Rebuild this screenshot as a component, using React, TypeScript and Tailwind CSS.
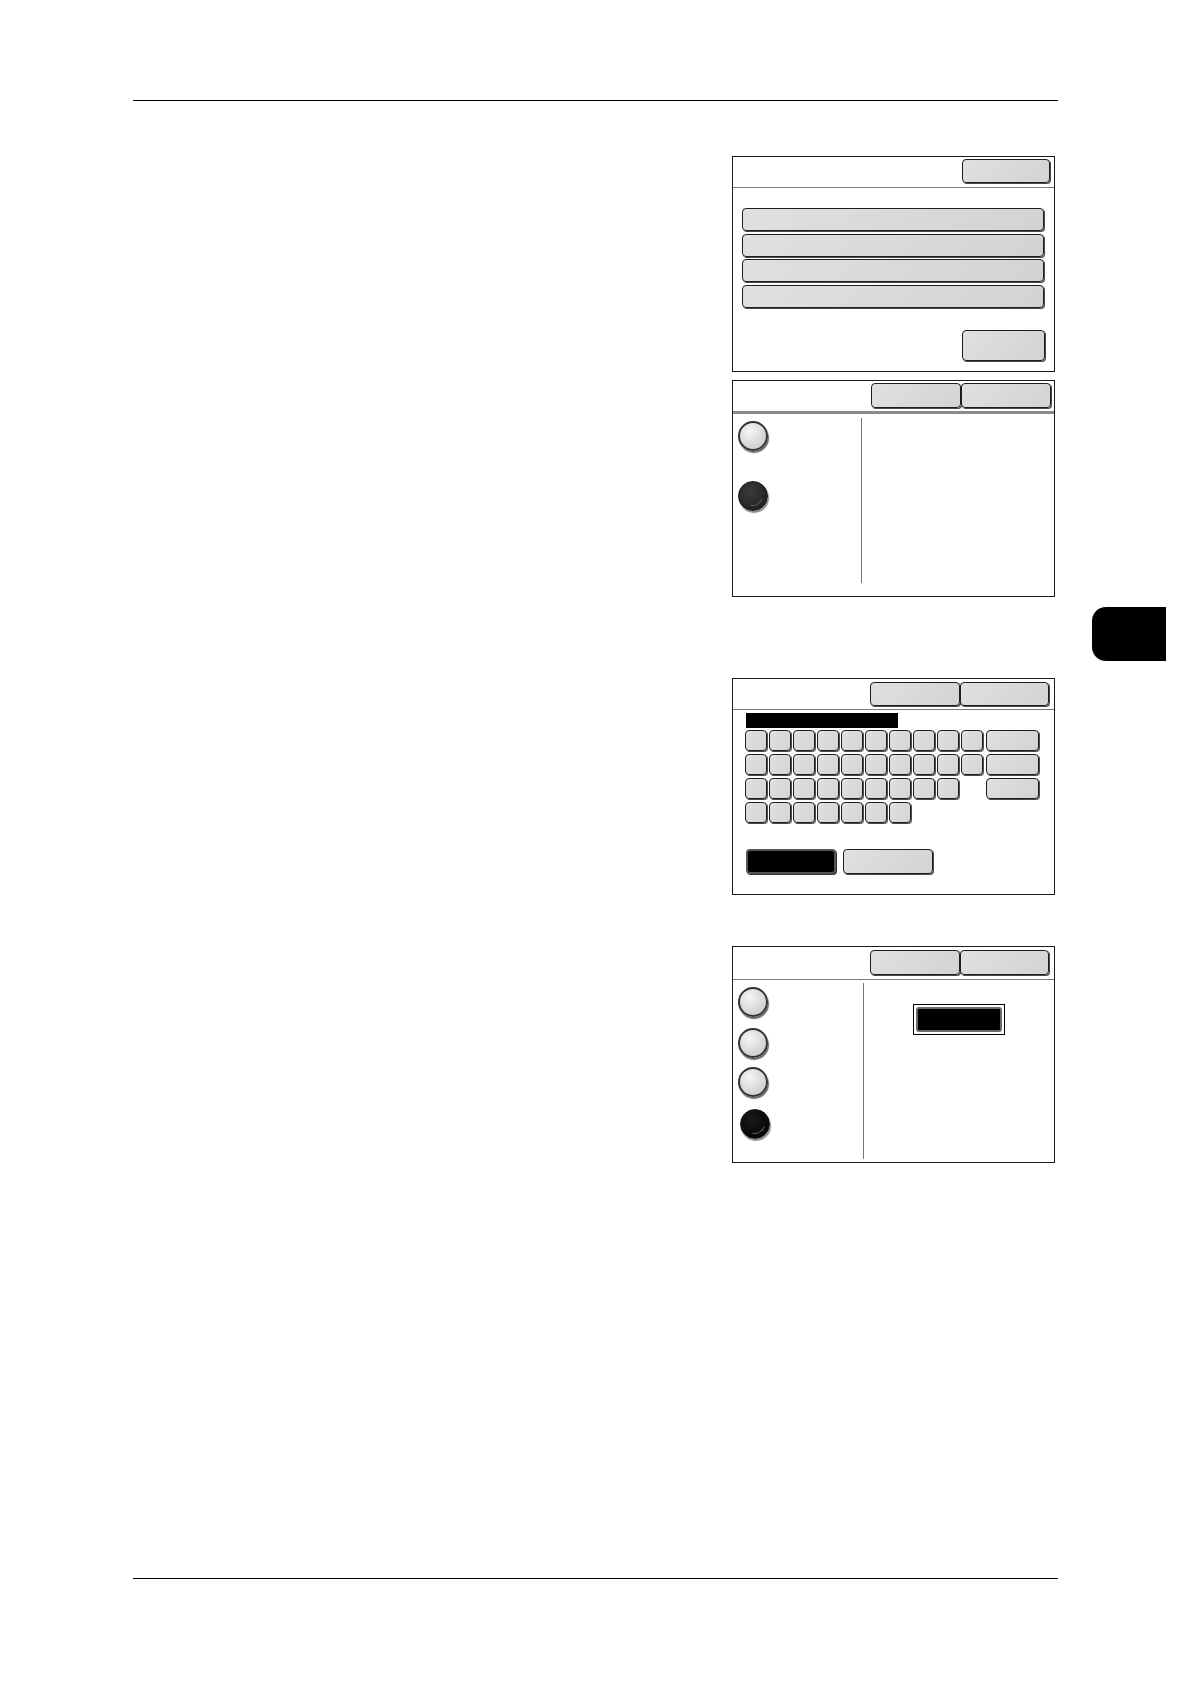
import React from "react";

// Plain grey touch-panel key with a dark rim and a heavier lower-right edge.
function Key({ className = "" }: { className?: string }) {
  return (
    <div
      className={`shrink-0 rounded-[4px] border border-[#1e1e1e] bg-[linear-gradient(135deg,#e0e0e0,#d3d3d3)] shadow-[1px_1px_0_#4a4a4a] ${className}`}
    />
  );
}

function DarkKey({ className = "" }: { className?: string }) {
  return (
    <div
      className={`shrink-0 rounded-[4px] border-2 border-[#555] bg-black shadow-[1px_1px_0_#333] ${className}`}
    />
  );
}

function Radio({ on = false, tone = "black" }: { on?: boolean; tone?: "black" | "charcoal" }) {
  if (!on) {
    return (
      <div className="shrink-0 w-[30px] h-[30px] rounded-full border-2 border-[#333] bg-[radial-gradient(circle_at_38%_32%,#f6f6f6,#d6d6d6_60%,#cacaca)] shadow-[1px_2px_1px_#6a6a6a]" />
    );
  }
  return (
    <div
      className={`relative shrink-0 w-[30px] h-[30px] rounded-full border border-[#111] shadow-[1px_2px_1px_#8a8a8a] ${
        tone === "charcoal"
          ? "bg-[radial-gradient(circle_at_40%_35%,#3a3a3a,#1c1c1c)]"
          : "bg-[radial-gradient(circle_at_40%_35%,#1a1a1a,#000)]"
      }`}
    >
      {/* faint glint along the lower-right rim */}
      <span className="absolute inset-[4px] rounded-full border border-transparent border-b-[#5c5c5c] rotate-[-30deg]" />
    </div>
  );
}

function Rule() {
  return <div className="w-[925px] h-px bg-black" />;
}

// Panel 1 — a menu list with a close key on top and a confirm key below
function MenuPanel() {
  return (
    <div className="w-[323px] h-[216px] border border-[#1a1a1a] flex flex-col bg-white">
      <div className="h-[30px] flex justify-end items-start pt-[2px] pr-[4px]">
        <Key className="w-[88px] h-[24px]" />
      </div>
      <div className="h-px bg-[#7a7a7a]" />
      <div className="flex flex-col gap-[2.5px] pl-[9px] pr-[10px] pt-[20px]">
        <Key className="h-[23px]" />
        <Key className="h-[23px]" />
        <Key className="h-[23px]" />
        <Key className="h-[23px]" />
      </div>
      <div className="flex justify-end pr-[9px] mt-[22px]">
        <Key className="w-[83px] h-[31px]" />
      </div>
    </div>
  );
}

// Panel 2 — two radio options, the lower one chosen
function TwoOptionPanel() {
  return (
    <div className="w-[323px] h-[217px] border border-[#1a1a1a] flex flex-col bg-white">
      <div className="h-[30px] flex justify-end items-start pt-[2px] pr-[3px]">
        <Key className="w-[90px] h-[25px]" />
        <Key className="w-[90px] h-[25px]" />
      </div>
      <div className="h-[3px] bg-[#8a8a8a]" />
      <div className="flex flex-1 min-h-0">
        <div className="w-[128px] shrink-0 flex flex-col gap-[30px] pl-[5px] pt-[7px]">
          <Radio />
          <Radio on tone="charcoal" />
        </div>
        <div className="w-px bg-[#777] mt-[4px] mb-[13px]" />
        <div className="flex-1" />
      </div>
    </div>
  );
}

// Panel 3 — on-screen keyboard with entry field
function KeyboardPanel() {
  const row = (n: number) =>
    Array.from({ length: n }, (_, i) => <Key key={i} className="w-[22px] h-[21px]" />);

  return (
    <div className="w-[323px] h-[217px] border border-[#1a1a1a] flex flex-col bg-white">
      <div className="h-[30px] flex justify-end items-start pt-[3px] pr-[5px]">
        <Key className="w-[90px] h-[24px]" />
        <Key className="w-[89px] h-[24px]" />
      </div>
      <div className="h-px bg-[#7a7a7a]" />
      <div className="pl-[13px] pt-[3px]">
        <div className="w-[152px] h-[15px] bg-black" />
      </div>
      <div className="flex flex-col gap-[3px] pl-[12px] pt-[2px]">
        <div className="flex">
          <div className="w-[241px] flex gap-[2px]">{row(10)}</div>
          <Key className="w-[53px] h-[21px]" />
        </div>
        <div className="flex">
          <div className="w-[241px] flex gap-[2px]">{row(10)}</div>
          <Key className="w-[53px] h-[21px]" />
        </div>
        <div className="flex">
          <div className="w-[241px] flex gap-[2px]">{row(9)}</div>
          <Key className="w-[53px] h-[21px]" />
        </div>
        <div className="flex gap-[2px]">{row(7)}</div>
      </div>
      <div className="flex gap-[7px] pl-[13px] mt-[26px]">
        <DarkKey className="w-[90px] h-[25px]" />
        <Key className="w-[90px] h-[25px]" />
      </div>
    </div>
  );
}

// Panel 4 — four radio options, last one chosen, selected value on the right
function FourOptionPanel() {
  return (
    <div className="w-[323px] h-[217px] border border-[#1a1a1a] flex flex-col bg-white">
      <div className="h-[32px] flex justify-end items-start pt-[3px] pr-[5px]">
        <Key className="w-[90px] h-[25px]" />
        <Key className="w-[89px] h-[25px]" />
      </div>
      <div className="h-px bg-[#7a7a7a]" />
      <div className="flex flex-1 min-h-0">
        <div className="w-[130px] shrink-0 flex flex-col pl-[5px] pt-[7px]">
          <Radio />
          <div className="mt-[11px]">
            <Radio />
          </div>
          <div className="mt-[9px]">
            <Radio />
          </div>
          <div className="mt-[12px] ml-[2px]">
            <Radio on />
          </div>
        </div>
        <div className="w-px bg-[#777] mt-[3px] mb-[3px]" />
        <div className="flex-1 flex justify-center items-start pt-[24px]">
          <div className="w-[92px] h-[31px] border border-black bg-white p-[2px]">
            <div className="h-full rounded-[3px] border-2 border-[#6a6a6a] bg-black" />
          </div>
        </div>
      </div>
    </div>
  );
}

export default function App() {
  return (
    <div className="w-[1190px] h-[1684px] bg-white flex flex-col">
      <div className="pt-[100px] pl-[133px]">
        <Rule />
      </div>

      <div className="flex mt-[55px]">
        <div className="w-[732px] shrink-0" />
        <div className="flex flex-col w-[323px] shrink-0">
          <MenuPanel />
          <div className="mt-[8px]">
            <TwoOptionPanel />
          </div>
          <div className="mt-[81px]">
            <KeyboardPanel />
          </div>
          <div className="mt-[51px]">
            <FourOptionPanel />
          </div>
        </div>
        {/* chapter thumb tab */}
        <div className="ml-[37px] mt-[451px] w-[74px] h-[54px] rounded-l-[14px] bg-black shrink-0" />
      </div>

      <div className="mt-auto mb-[105px] pl-[133px]">
        <Rule />
      </div>
    </div>
  );
}
